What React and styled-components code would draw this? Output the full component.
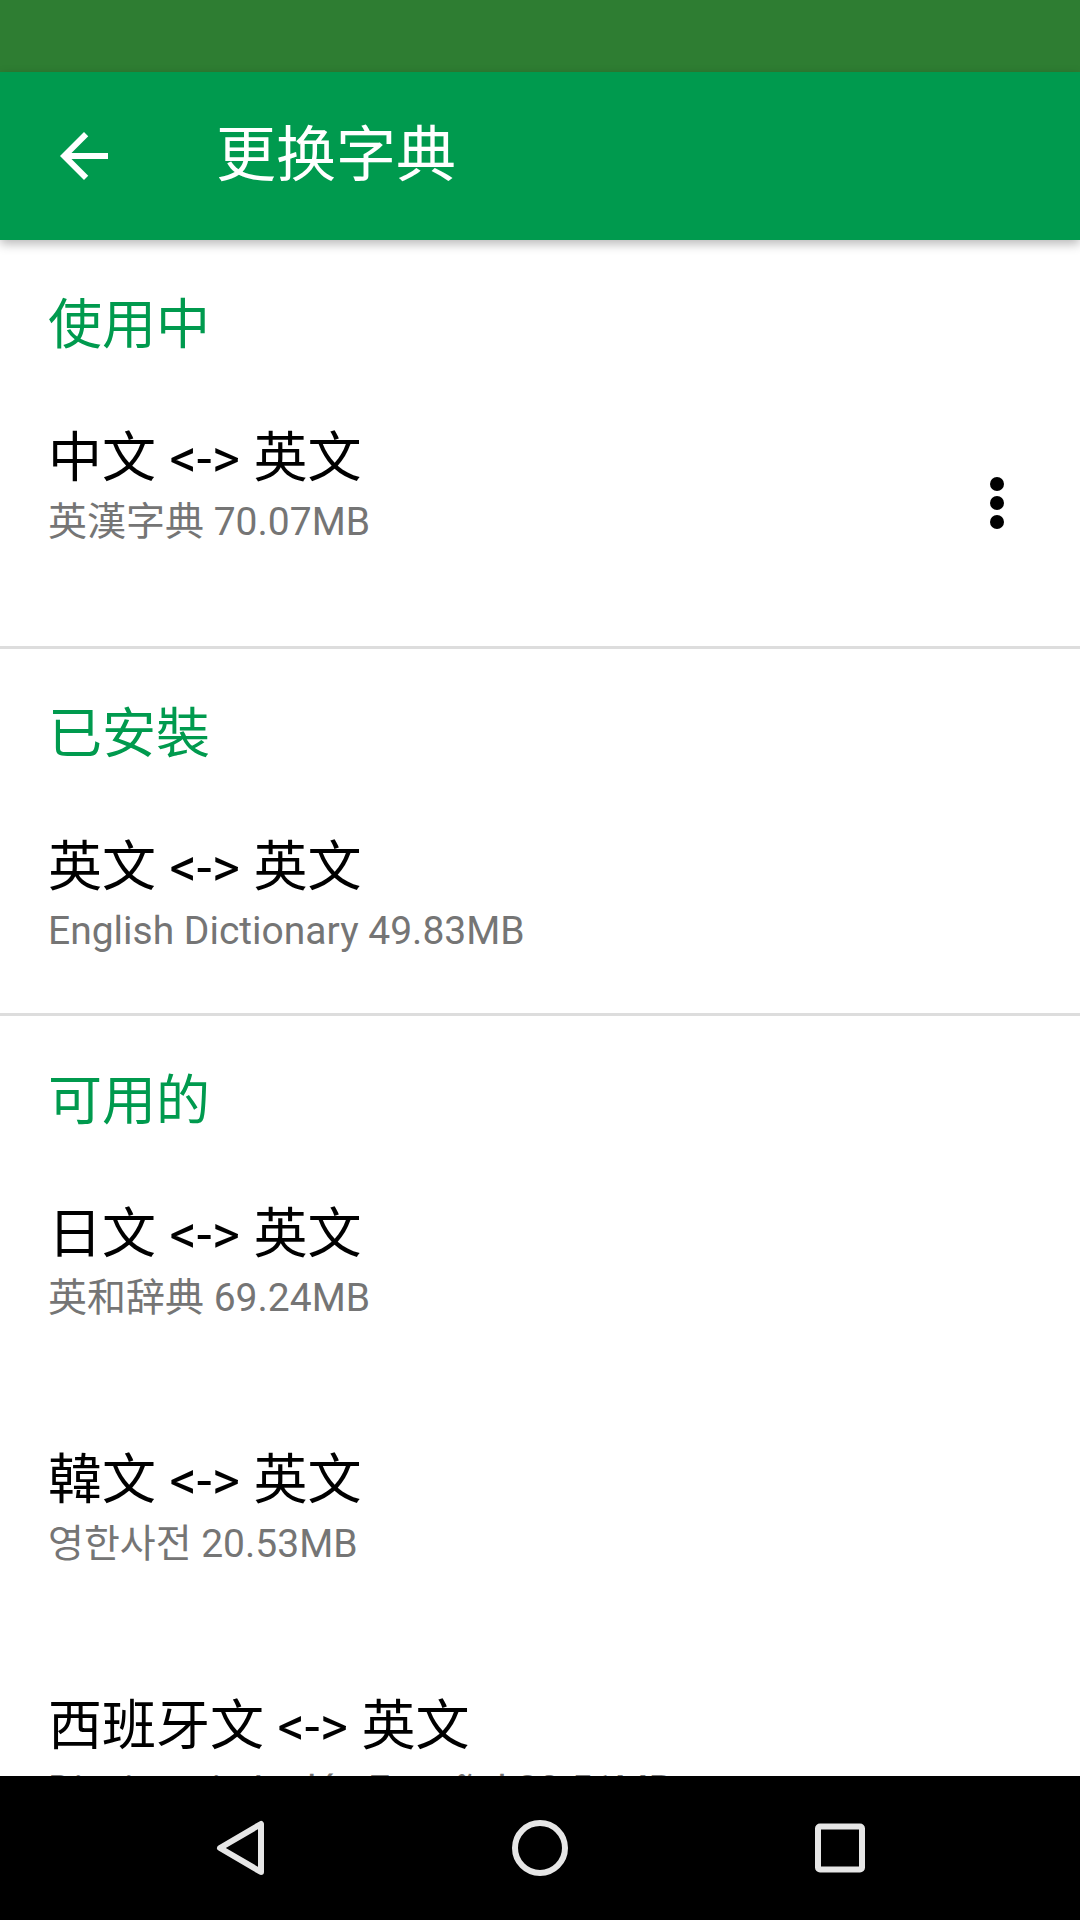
import React from "react";
import styled, { createGlobalStyle } from "styled-components";

const GlobalStyle = createGlobalStyle`
  html, body { margin: 0; padding: 0; background: #ffffff; }
  body { font-family: Roboto, "Noto Sans CJK SC", sans-serif; }
`;

const Screen = styled.div`
  width: 1080px;
  height: 1920px;
  display: flex;
  flex-direction: column;
  overflow: hidden;
  background: #ffffff;
`;

const StatusBar = styled.div`
  height: 72px;
  flex: none;
  background: #2e7d32;
`;

const AppBar = styled.header`
  height: 168px;
  flex: none;
  display: flex;
  align-items: center;
  background: #009a4e;
  box-shadow: 0 4px 10px rgba(0, 0, 0, 0.28);
  position: relative;
  z-index: 1;
`;

const NavIconButton = styled.button`
  width: 168px;
  height: 168px;
  flex: none;
  display: flex;
  align-items: center;
  justify-content: center;
  background: none;
  border: 0;
  padding: 0;
`;

const Title = styled.h1`
  margin: 0 0 0 48px;
  font-size: 60px;
  font-weight: 400;
  line-height: 72px;
  color: #ffffff;
`;

const Content = styled.main`
  flex: 1;
  overflow: hidden;
`;

const Section = styled.section`
  border-bottom: ${(p) => (p.$divider ? "3px solid #dddddd" : "none")};
`;

const SectionHeader = styled.h2`
  margin: 0;
  height: 120px;
  box-sizing: border-box;
  padding: 54px 48px 0;
  font-size: 54px;
  font-weight: 400;
  line-height: 64px;
  color: #009a4e;
`;

const Item = styled.div`
  height: ${(p) => p.$height}px;
  box-sizing: border-box;
  padding: 67px 47px 0 48px;
  display: flex;
  align-items: flex-start;
`;

const ItemText = styled.div`
  flex: 1;
  min-width: 0;
`;

const ItemTitle = styled.div`
  font-size: 54px;
  line-height: 64px;
  color: #000000;
  white-space: nowrap;
`;

const ItemSubtitle = styled.div`
  margin-top: 7px;
  font-size: 39px;
  line-height: 48px;
  color: #757575;
  white-space: nowrap;
`;

const MoreButton = styled.button`
  width: 72px;
  height: 72px;
  flex: none;
  margin-top: 40px;
  display: flex;
  align-items: center;
  justify-content: center;
  background: none;
  border: 0;
  padding: 0;
`;

const NavBar = styled.nav`
  height: 144px;
  flex: none;
  background: #000000;
  display: flex;
  justify-content: center;
  align-items: center;
`;

const SysButton = styled.div`
  width: 300px;
  height: 144px;
  display: flex;
  align-items: center;
  justify-content: center;
`;

const BackArrow = () => (
  <svg width="72" height="72" viewBox="0 0 24 24">
    <path
      fill="#ffffff"
      d="M20 11H7.83l5.59-5.59L12 4l-8 8 8 8 1.41-1.41L7.83 13H20v-2z"
    />
  </svg>
);

const Dots = () => (
  <svg width="72" height="72" viewBox="0 0 72 72">
    <circle cx="36" cy="17" r="7" fill="#000" />
    <circle cx="36" cy="36" r="7" fill="#000" />
    <circle cx="36" cy="55" r="7" fill="#000" />
  </svg>
);

const NavBack = () => (
  <svg width="60" height="60" viewBox="0 0 60 60">
    <path
      d="M10 30 L51 6 L51 54 Z"
      fill="none"
      stroke="#e6e6e6"
      strokeWidth="6"
      strokeLinejoin="round"
    />
  </svg>
);

const NavHome = () => (
  <svg width="60" height="60" viewBox="0 0 60 60">
    <circle cx="30" cy="30" r="25" fill="none" stroke="#e6e6e6" strokeWidth="6" />
  </svg>
);

const NavRecent = () => (
  <svg width="60" height="60" viewBox="0 0 60 60">
    <rect
      x="8"
      y="8.5"
      width="44"
      height="43"
      rx="2"
      fill="none"
      stroke="#e6e6e6"
      strokeWidth="6"
    />
  </svg>
);

const sections = [
  {
    title: "使用中",
    divider: true,
    items: [
      { name: "中文 <-> 英文", sub: "英漢字典 70.07MB", height: 286, more: true },
    ],
  },
  {
    title: "已安裝",
    divider: true,
    items: [
      { name: "英文 <-> 英文", sub: "English Dictionary 49.83MB", height: 244 },
    ],
  },
  {
    title: "可用的",
    divider: false,
    items: [
      { name: "日文 <-> 英文", sub: "英和辞典 69.24MB", height: 246 },
      { name: "韓文 <-> 英文", sub: "영한사전 20.53MB", height: 246 },
      { name: "西班牙文 <-> 英文", sub: "Diccionario Inglés-Español 82.51MB", height: 246 },
    ],
  },
];

export default function App() {
  return (
    <>
      <GlobalStyle />
      <Screen>
        <StatusBar />
        <AppBar>
          <NavIconButton aria-label="back">
            <BackArrow />
          </NavIconButton>
          <Title>更换字典</Title>
        </AppBar>
        <Content>
          {sections.map((s) => (
            <Section key={s.title} $divider={s.divider}>
              <SectionHeader>{s.title}</SectionHeader>
              {s.items.map((it) => (
                <Item key={it.name} $height={it.height}>
                  <ItemText>
                    <ItemTitle>{it.name}</ItemTitle>
                    <ItemSubtitle>{it.sub}</ItemSubtitle>
                  </ItemText>
                  {it.more && (
                    <MoreButton aria-label="more">
                      <Dots />
                    </MoreButton>
                  )}
                </Item>
              ))}
            </Section>
          ))}
        </Content>
        <NavBar>
          <SysButton>
            <NavBack />
          </SysButton>
          <SysButton>
            <NavHome />
          </SysButton>
          <SysButton>
            <NavRecent />
          </SysButton>
        </NavBar>
      </Screen>
    </>
  );
}
